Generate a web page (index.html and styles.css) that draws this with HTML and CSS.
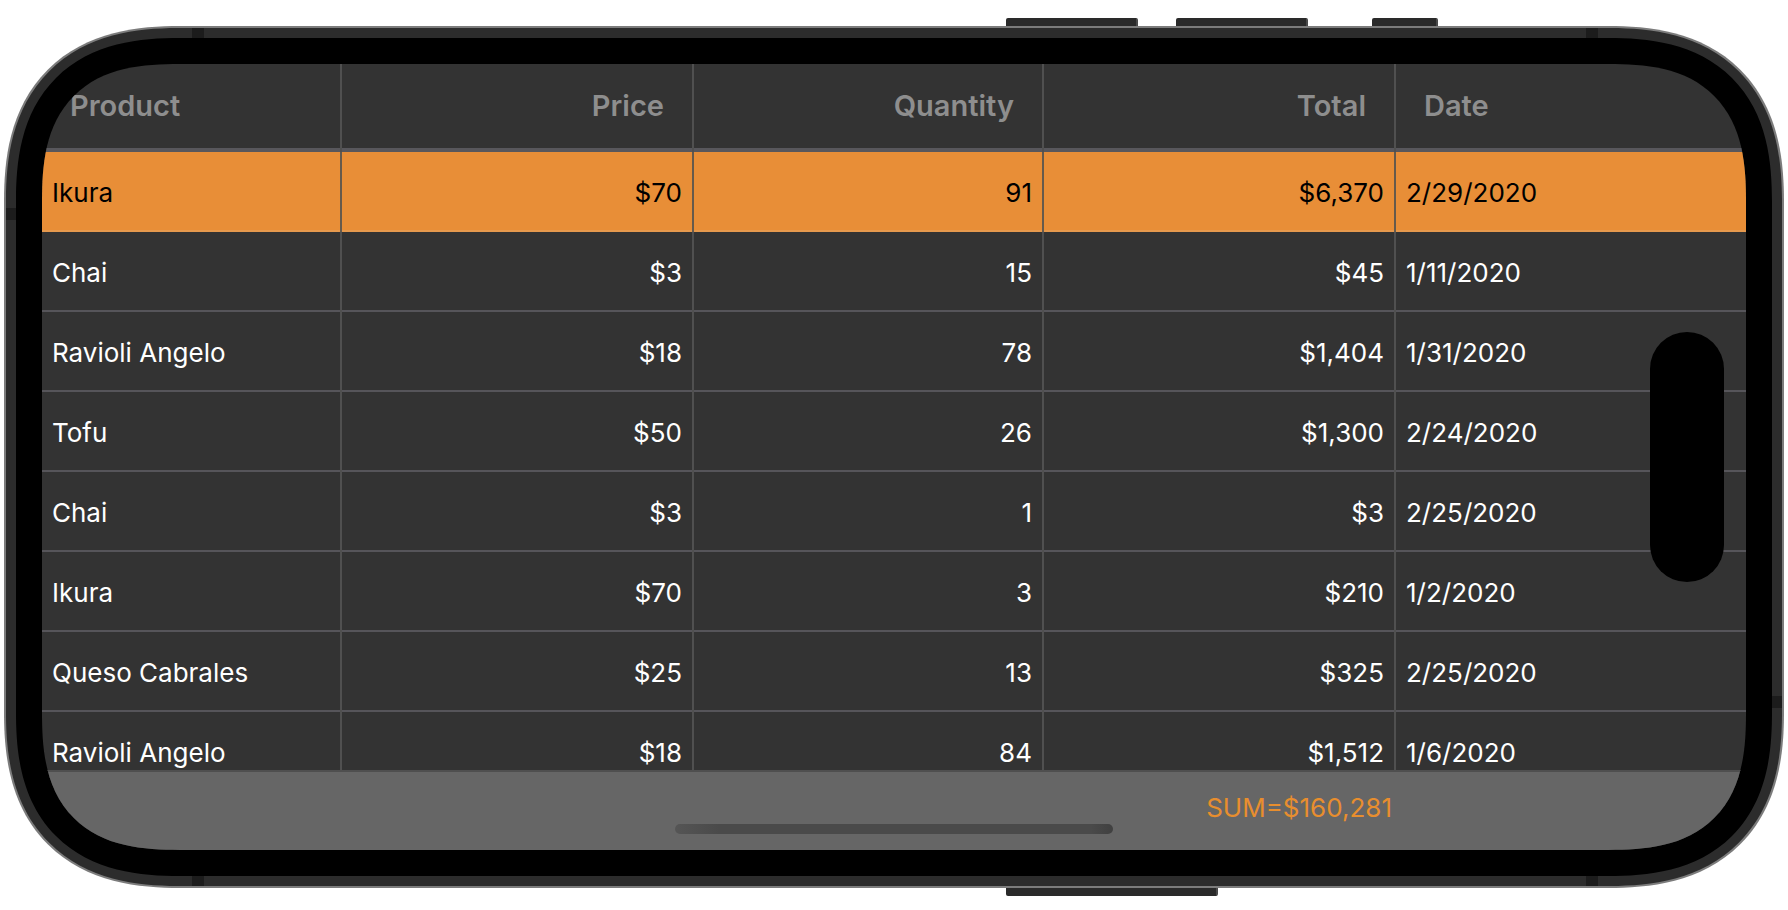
FILE: index.html
```html
<!DOCTYPE html>
<html lang="en">
<head>
<meta charset="utf-8">
<meta name="viewport" content="width=device-width, initial-scale=1">
<title>Sales data grid</title>
<link rel="stylesheet" href="styles.css">
</head>
<body>
<main class="phone">
  <span class="side-button side-button-1"></span>
  <span class="side-button side-button-2"></span>
  <span class="side-button side-button-3"></span>
  <span class="side-button side-button-power"></span>
  <div class="frame">
    <span class="band band-top band-start"></span>
    <span class="band band-top band-end"></span>
    <span class="band band-bottom band-start"></span>
    <span class="band band-bottom band-end"></span>
    <span class="band band-left"></span>
    <span class="band band-right"></span>
    <div class="bezel">
      <div class="screen">
        <div class="grid-view">
          <table class="grid">
            <colgroup><col class="col-product"><col class="col-money"><col><col class="col-money"><col></colgroup>
            <thead>
              <tr><th scope="col">Product</th><th scope="col" class="num">Price</th><th scope="col" class="num">Quantity</th><th scope="col" class="num">Total</th><th scope="col">Date</th></tr>
            </thead>
            <tbody>
              <tr class="selected"><td>Ikura</td><td class="num">$70</td><td class="num">91</td><td class="num">$6,370</td><td>2/29/2020</td></tr>
              <tr><td>Chai</td><td class="num">$3</td><td class="num">15</td><td class="num">$45</td><td>1/11/2020</td></tr>
              <tr><td>Ravioli Angelo</td><td class="num">$18</td><td class="num">78</td><td class="num">$1,404</td><td>1/31/2020</td></tr>
              <tr><td>Tofu</td><td class="num">$50</td><td class="num">26</td><td class="num">$1,300</td><td>2/24/2020</td></tr>
              <tr><td>Chai</td><td class="num">$3</td><td class="num">1</td><td class="num">$3</td><td>2/25/2020</td></tr>
              <tr><td>Ikura</td><td class="num">$70</td><td class="num">3</td><td class="num">$210</td><td>1/2/2020</td></tr>
              <tr><td>Queso Cabrales</td><td class="num">$25</td><td class="num">13</td><td class="num">$325</td><td>2/25/2020</td></tr>
              <tr><td>Ravioli Angelo</td><td class="num">$18</td><td class="num">84</td><td class="num">$1,512</td><td>1/6/2020</td></tr>
            </tbody>
          </table>
        </div>
        <footer class="summary"><output class="summary-total">SUM=$160,281</output></footer>
        <span class="island"></span>
        <span class="home-bar"></span>
      </div>
    </div>
  </div>
</main>
</body>
</html>
```
FILE: styles.css
```css
*, *::before, *::after { box-sizing: border-box; }

body {
  margin: 0;
  height: 100vh;
  padding: 26px 4px 22px;
  display: flex;
  background: #fff;
  font-family: Inter, "Liberation Sans", sans-serif;
  font-size: 26px;
  line-height: 32px;
  color: #fff;
}

.phone {
  position: relative;
  flex: 1;
  display: flex;
  min-width: 0;
}

/* Metal body */
.frame {
  position: relative;
  flex: 1;
  display: flex;
  min-width: 0;
  padding: 10px;
  overflow: hidden;
  border: 2px solid #7c7c7c;
  border-radius: 156px;
  background: #2c2c2c;
}

.bezel {
  position: relative;
  flex: 1;
  display: flex;
  min-width: 0;
  padding: 26px;
  border-radius: 144px;
  background: #000;
}

.screen {
  position: relative;
  flex: 1;
  display: flex;
  flex-direction: column;
  min-width: 0;
  overflow: hidden;
  border-radius: 118px;
  background: #333;
}

/* Continuous corners where the browser can draw them */
@supports (corner-shape: superellipse(1.3)) {
  .frame { border-radius: 176px; corner-shape: superellipse(1.28); }
  .bezel { border-radius: 164px; corner-shape: superellipse(1.31); }
  .screen { border-radius: 138px; corner-shape: superellipse(1.4); }
}

.side-button {
  position: absolute;
  top: -8px;
  width: 132px;
  height: 8px;
  border-radius: 2px 2px 0 0;
  border-right: 2px solid #4a4a4a;
  background: #2a2a2a;
}
.side-button-1 { right: 646px; }
.side-button-2 { right: 476px; }
.side-button-3 { right: 346px; width: 66px; }
.side-button-power {
  top: auto;
  bottom: -8px;
  right: 566px;
  width: 212px;
  border-radius: 0 0 2px 2px;
}

.band {
  position: absolute;
  width: 12px;
  height: 10px;
  background: #1c1c1c;
}
.band-top { top: 0; }
.band-bottom { bottom: 0; }
.band-start { left: 186px; }
.band-end { right: 184px; }
.band-left { left: 0; top: 180px; width: 10px; height: 12px; }
.band-right { right: 0; bottom: 178px; width: 10px; height: 12px; }

/* Data grid */
.grid-view {
  flex: 1;
  min-height: 0;
  overflow: hidden;
}

.grid {
  width: 100%;
  table-layout: fixed;
  border-collapse: separate;
  border-spacing: 0;
}
.col-product { width: 300px; }
.col-money { width: 352px; }

th, td {
  text-align: left;
  white-space: nowrap;
  border-right: 2px solid #505050;
}
th:last-child, td:last-child { border-right: 0; }

th {
  height: 88px;
  padding: 0 28px 4px;
  font-size: 29px;
  font-weight: 600;
  color: #8e8e8e;
  box-shadow: inset 0 -4px #58575c;
}

td {
  height: 80px;
  padding: 2px 10px 0;
  font-weight: 400;
  box-shadow: inset 0 -2px #56555a;
}

.num { text-align: right; }

.selected td {
  color: #000;
  border-right-color: #665a4c;
  background: #e88e37;
  box-shadow: inset 0 -2px #e6994d;
}

.summary {
  height: 80px;
  padding-bottom: 6px;
  display: grid;
  grid-template-columns: 300px 352px 1fr 352px 1fr;
  align-items: center;
  border-top: 2px solid #4f4f4f;
  background: #666;
}
.summary-total {
  grid-column: 4;
  padding-right: 4px;
  text-align: right;
  color: #e88e2e;
}

.island {
  position: absolute;
  top: 268px;
  right: 22px;
  width: 74px;
  height: 250px;
  border-radius: 37px;
  background: #000;
}

.home-bar {
  position: absolute;
  left: 50%;
  bottom: 16px;
  width: 438px;
  height: 10px;
  margin-left: -219px;
  border-radius: 5px;
  background: linear-gradient(90deg, #555, #4a4a4a 10%, #4a4a4a 95%, #404040);
}
```
